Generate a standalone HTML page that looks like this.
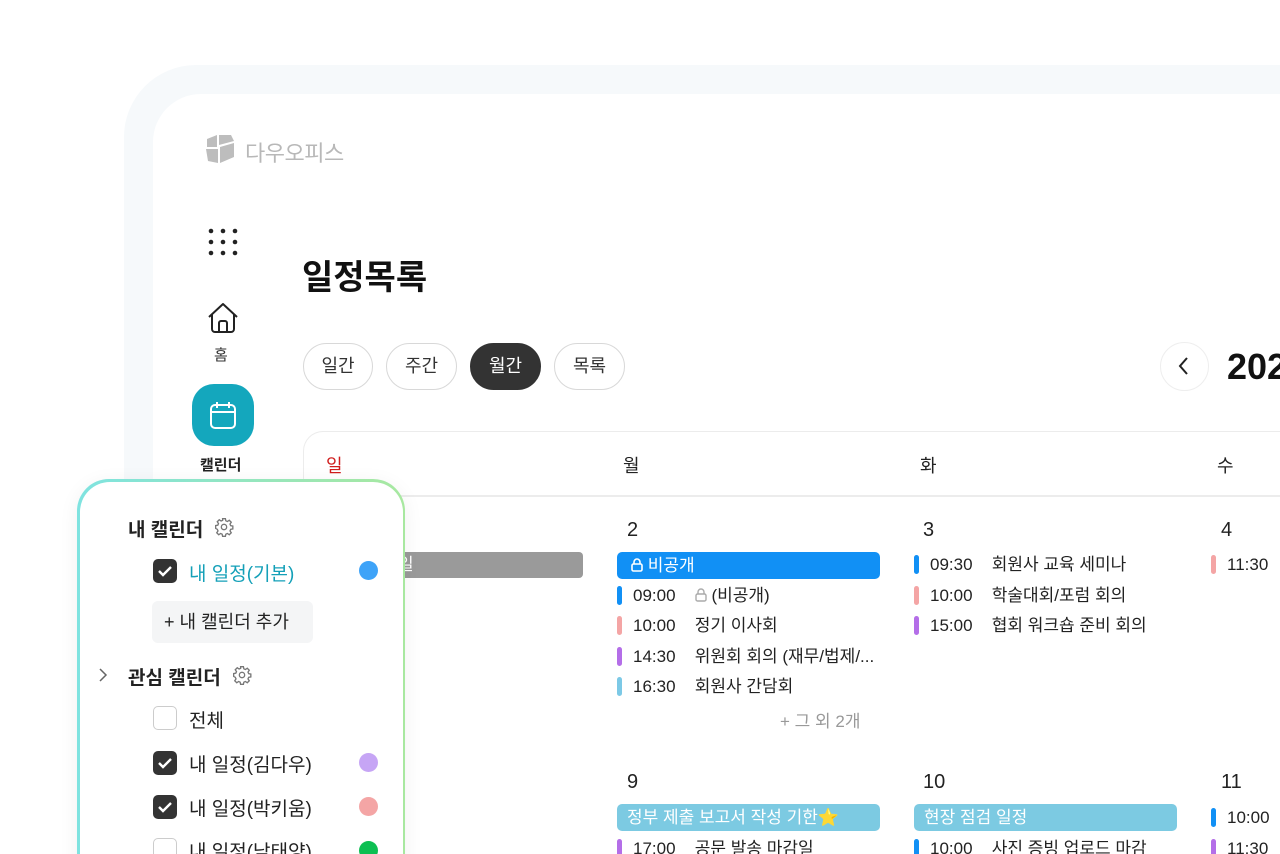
<!DOCTYPE html>
<html style="width:1280px;height:854px;overflow:hidden"><head><meta charset="utf-8"><style>
*{margin:0;padding:0;box-sizing:border-box}
body{width:1280px;height:854px;overflow:hidden;background:#fff;font-family:"Liberation Sans","Noto Sans CJK KR",sans-serif;color:#222}
#w{position:relative;width:1280px;height:854px;overflow:hidden}
.a{position:absolute}
.frame{left:124px;top:65px;width:1156px;height:789px;border-radius:72px 0 0 0;background:#f6f9fb}
.inner{left:153px;top:94px;width:1127px;height:760px;border-radius:48px 0 0 0;background:#fff}
.pill{top:343px;height:47px;border:1.5px solid #d8d8d8;border-radius:24px;font-size:18px;line-height:44px;text-align:center;color:#333;background:#fff}
.ev{font-size:17px;color:#222;height:22px;line-height:22px;white-space:nowrap}
.ev i{display:inline-block;width:5px;height:19px;border-radius:3px;vertical-align:-4px;margin-right:11px}
.ev b{font-weight:normal;display:inline-block;width:57px}
.day{font-size:20px;color:#222}
.chk{width:24px;height:24px;border-radius:5px;background:#333;}
.chk svg{display:block}
.unchk{width:24px;height:24px;border-radius:5px;border:1.5px solid #ccc;background:#fff}
.lab{font-size:19px;color:#222}
.dot{width:19px;height:19px;border-radius:50%}
</style></head><body><div id="w">
<div class="a frame"></div>
<div class="a inner"></div>

<svg class="a" style="left:204px;top:133px" width="32" height="32" viewBox="0 0 32 32"><path d="M3 6l10-4v12H3z M15 2h12l3 6-15 4z M2 16h12v14l-10-2z M16 14l14-4v14l-14 6z" fill="#bdbdbd"/></svg>
<div class="a" style="left:245px;top:136px;font-size:22px;color:#b8b8b8;letter-spacing:-0.5px">다우오피스</div>

<svg class="a" style="left:208px;top:228px" width="30" height="28"><g fill="#222"><circle cx="3" cy="3" r="2.3"/><circle cx="15" cy="3" r="2.3"/><circle cx="27" cy="3" r="2.3"/><circle cx="3" cy="14" r="2.3"/><circle cx="15" cy="14" r="2.3"/><circle cx="27" cy="14" r="2.3"/><circle cx="3" cy="25" r="2.3"/><circle cx="15" cy="25" r="2.3"/><circle cx="27" cy="25" r="2.3"/></g></svg>
<svg class="a" style="left:206px;top:302px" width="34" height="32" viewBox="0 0 34 32" fill="none" stroke="#222" stroke-width="2" stroke-linejoin="round"><path d="M3 15L17 2l14 13M6 12v15a3 3 0 0 0 3 3h16a3 3 0 0 0 3-3V12M13 30v-9a2 2 0 0 1 2-2h4a2 2 0 0 1 2 2v9"/></svg>
<div class="a" style="left:214px;top:344px;font-size:15px;color:#333">홈</div>
<div class="a" style="left:192px;top:384px;width:62px;height:62px;border-radius:22px;background:#14a7bd"></div>
<svg class="a" style="left:209px;top:400px" width="28" height="30" viewBox="0 0 28 30" fill="none" stroke="#fff" stroke-width="2"><rect x="2" y="5" width="24" height="23" rx="4"/><path d="M2 12h24M8 2v6M20 2v6"/></svg>
<div class="a" style="left:200px;top:454px;font-size:15px;color:#222;font-weight:bold">캘린더</div>

<div class="a" style="left:302px;top:250px;font-size:34px;font-weight:bold;color:#111">일정목록</div>

<div class="a pill" style="left:303px;width:70px">일간</div>
<div class="a pill" style="left:386px;width:71px">주간</div>
<div class="a pill" style="left:470px;width:71px;background:#333;color:#fff;border-color:#333">월간</div>
<div class="a pill" style="left:554px;width:71px">목록</div>

<div class="a" style="left:1160px;top:342px;width:49px;height:49px;border-radius:50%;border:1.5px solid #eee"></div>
<svg class="a" style="left:1177px;top:356px" width="14" height="20"><path d="M10 2L3 10l7 8" fill="none" stroke="#222" stroke-width="2"/></svg>
<div class="a" style="left:1227px;top:346px;font-size:36px;font-weight:bold;color:#111">202</div>

<div class="a" style="left:303px;top:431px;width:977px;height:423px;border:1.5px solid #ececec;border-right:none;border-bottom:none;border-radius:20px 0 0 0"></div>
<div class="a" style="left:303px;top:495px;width:977px;height:1.5px;background:#ececec"></div>
<div class="a" style="left:326px;top:452px;font-size:18px;color:#d01c1c">일</div>
<div class="a" style="left:623px;top:452px;font-size:18px">월</div>
<div class="a" style="left:920px;top:452px;font-size:18px">화</div>
<div class="a" style="left:1217px;top:452px;font-size:18px">수</div>

<div class="a" style="left:320px;top:552px;width:263px;height:26px;border-radius:4px;background:#9a9a9a;color:#fff;font-size:17px;line-height:26px;padding-left:78px">일</div>

<div class="a day" style="left:627px;top:519px">2</div>
<div class="a day" style="left:923px;top:519px">3</div>
<div class="a day" style="left:1221px;top:519px">4</div>
<div class="a" style="left:617px;top:552px;width:263px;height:27px;border-radius:5px;background:#1190f5;color:#fff;font-size:17px;line-height:27px;padding-left:14px">
<svg width="12" height="14" viewBox="0 0 12 14" style="vertical-align:-1px" fill="none" stroke="#fff" stroke-width="1.6"><rect x="1" y="6" width="10" height="7" rx="1.5"/><path d="M3 6V4a3 3 0 0 1 6 0v2"/></svg> 비공개</div>
<div class="a ev" style="left:617px;top:585px"><i style="background:#1190f5"></i><b>09:00</b> <svg width="12" height="14" viewBox="0 0 12 14" style="vertical-align:-1px" fill="none" stroke="#aaa" stroke-width="1.4"><rect x="1" y="6" width="10" height="7" rx="1.5"/><path d="M3 6V4a3 3 0 0 1 6 0v2"/></svg> (비공개)</div>
<div class="a ev" style="left:617px;top:615px"><i style="background:#f4a5a5"></i><b>10:00</b> 정기 이사회</div>
<div class="a ev" style="left:617px;top:646px"><i style="background:#b46ee8"></i><b>14:30</b> 위원회 회의 (재무/법제/...</div>
<div class="a ev" style="left:617px;top:676px"><i style="background:#7cc9e6"></i><b>16:30</b> 회원사 간담회</div>
<div class="a" style="left:780px;top:707px;font-size:17px;color:#999">+ 그 외 2개</div>

<div class="a ev" style="left:914px;top:554px"><i style="background:#1190f5"></i><b>09:30</b> 회원사 교육 세미나</div>
<div class="a ev" style="left:914px;top:585px"><i style="background:#f4a5a5"></i><b>10:00</b> 학술대회/포럼 회의</div>
<div class="a ev" style="left:914px;top:615px"><i style="background:#b46ee8"></i><b>15:00</b> 협회 워크숍 준비 회의</div>
<div class="a ev" style="left:1211px;top:554px"><i style="background:#f4a5a5"></i><b>11:30</b></div>

<div class="a day" style="left:627px;top:771px">9</div>
<div class="a day" style="left:923px;top:771px">10</div>
<div class="a day" style="left:1221px;top:771px">11</div>
<div class="a" style="left:617px;top:804px;width:263px;height:27px;border-radius:5px;background:#7ccae2;color:#fff;font-size:17px;line-height:27px;padding-left:10px">정부 제출 보고서 작성 기한⭐</div>
<div class="a" style="left:914px;top:804px;width:263px;height:27px;border-radius:5px;background:#7ccae2;color:#fff;font-size:17px;line-height:27px;padding-left:10px">현장 점검 일정</div>
<div class="a ev" style="left:617px;top:838px"><i style="background:#b46ee8"></i><b>17:00</b> 공문 발송 마감일</div>
<div class="a ev" style="left:914px;top:838px"><i style="background:#1190f5"></i><b>10:00</b> 사진 증빙 업로드 마감</div>
<div class="a ev" style="left:1211px;top:807px"><i style="background:#1190f5"></i><b>10:00</b></div>
<div class="a ev" style="left:1211px;top:838px"><i style="background:#b46ee8"></i><b>11:30</b></div>

<div class="a" style="left:77px;top:479px;width:328px;height:420px;border-radius:32px;background:linear-gradient(90deg,#7fe3e0,#a8e8a0);padding:2.5px;box-shadow:0 4px 20px rgba(0,0,0,.06)"><div style="width:100%;height:100%;background:#fff;border-radius:30px"></div></div>
<div class="a" style="left:128px;top:515px;font-size:19px;font-weight:bold;color:#222">내 캘린더</div>
<svg class="a" style="left:214px;top:517px" width="20" height="20" viewBox="0 0 24 24" fill="none" stroke="#777" stroke-width="1.6"><circle cx="12" cy="12" r="3.2"/><path d="M10.3 2h3.4l.5 2.6 1.9.8 2.2-1.5 2.4 2.4-1.5 2.2.8 1.9 2.6.5v3.4l-2.6.5-.8 1.9 1.5 2.2-2.4 2.4-2.2-1.5-1.9.8-.5 2.6h-3.4l-.5-2.6-1.9-.8-2.2 1.5-2.4-2.4 1.5-2.2-.8-1.9L2 13.7v-3.4l2.6-.5.8-1.9-1.5-2.2 2.4-2.4 2.2 1.5 1.9-.8z"/></svg>
<div class="a chk" style="left:153px;top:559px"><svg width="24" height="24"><path d="M6 12l4 4 8-8" fill="none" stroke="#fff" stroke-width="2.4"/></svg></div>
<div class="a lab" style="left:189px;top:559px;color:#14a0b8">내 일정(기본)</div>
<div class="a dot" style="left:359px;top:561px;background:#3ea3f8"></div>
<div class="a" style="left:152px;top:601px;width:161px;height:42px;border-radius:6px;background:#f4f5f6;font-size:18px;line-height:42px;padding-left:12px;color:#222">+ 내 캘린더 추가</div>
<svg class="a" style="left:98px;top:667px" width="10" height="16"><path d="M2 2l6 6-6 6" fill="none" stroke="#666" stroke-width="1.5"/></svg>
<div class="a" style="left:128px;top:663px;font-size:19px;font-weight:bold;color:#222">관심 캘린더</div>
<svg class="a" style="left:232px;top:665px" width="20" height="20" viewBox="0 0 24 24" fill="none" stroke="#777" stroke-width="1.6"><circle cx="12" cy="12" r="3.2"/><path d="M10.3 2h3.4l.5 2.6 1.9.8 2.2-1.5 2.4 2.4-1.5 2.2.8 1.9 2.6.5v3.4l-2.6.5-.8 1.9 1.5 2.2-2.4 2.4-2.2-1.5-1.9.8-.5 2.6h-3.4l-.5-2.6-1.9-.8-2.2 1.5-2.4-2.4 1.5-2.2-.8-1.9L2 13.7v-3.4l2.6-.5.8-1.9-1.5-2.2 2.4-2.4 2.2 1.5 1.9-.8z"/></svg>
<div class="a unchk" style="left:153px;top:706px"></div>
<div class="a lab" style="left:189px;top:706px">전체</div>
<div class="a chk" style="left:153px;top:751px"><svg width="24" height="24"><path d="M6 12l4 4 8-8" fill="none" stroke="#fff" stroke-width="2.4"/></svg></div>
<div class="a lab" style="left:189px;top:750px">내 일정(김다우)</div>
<div class="a dot" style="left:359px;top:753px;background:#c6a5f5"></div>
<div class="a chk" style="left:153px;top:795px"><svg width="24" height="24"><path d="M6 12l4 4 8-8" fill="none" stroke="#fff" stroke-width="2.4"/></svg></div>
<div class="a lab" style="left:189px;top:794px">내 일정(박키움)</div>
<div class="a dot" style="left:359px;top:797px;background:#f4a5a5"></div>
<div class="a unchk" style="left:153px;top:838px"></div>
<div class="a lab" style="left:189px;top:837px">내 일정(남태양)</div>
<div class="a dot" style="left:359px;top:841px;background:#0dbf52"></div>
</div></body></html>
